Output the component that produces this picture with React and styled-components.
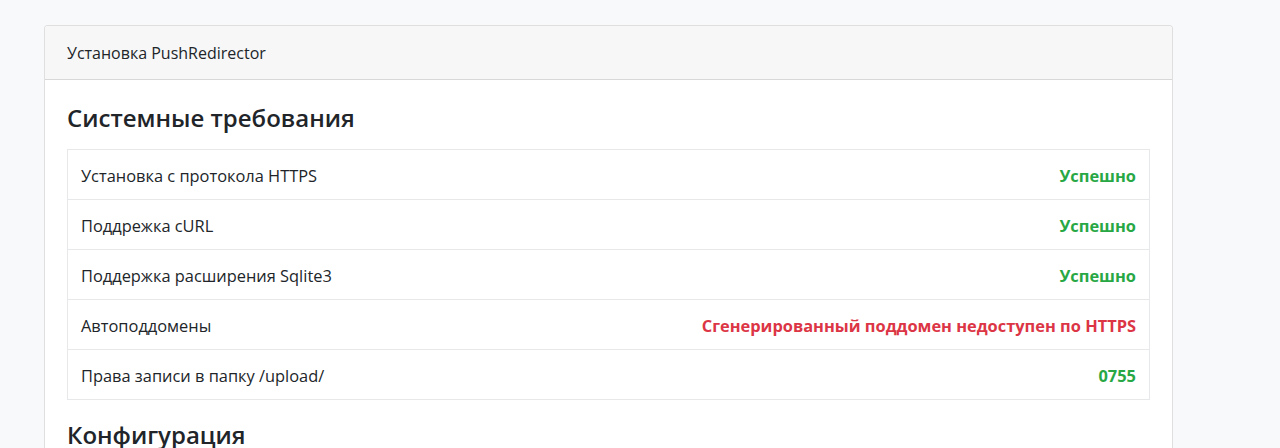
import React from "react";
import styled, { createGlobalStyle } from "styled-components";

const Global = createGlobalStyle`
  html, body { margin: 0; padding: 0; }
  body {
    background: #f8f9fa;
    font-family: "Open Sans", "Noto Sans", "Liberation Sans", sans-serif;
    color: #212529;
    font-size: 16px;
  }
`;

const Page = styled.div`
  padding: 25px 0 0 44px;
`;

const Card = styled.section`
  width: 1129px;
  box-sizing: border-box;
  background: #fff;
  border: 1px solid rgba(0, 0, 0, 0.125);
  border-radius: 4px;
  overflow: hidden;
`;

const CardHeader = styled.header`
  background: #f7f7f7;
  border-bottom: 1px solid rgba(0, 0, 0, 0.125);
  padding: 15px 22px 14px;
  line-height: 24px;
  font-size: 16px;
`;

const CardBody = styled.div`
  padding: 22px 22px 22px;
`;

const Heading = styled.h3`
  margin: 0 0 16px;
  font-size: 24px;
  line-height: 31px;
  font-weight: 600;
`;

const Table = styled.table`
  width: 100%;
  border-collapse: collapse;
  margin-bottom: 19px;
  background: #fff;
`;

const Cell = styled.td`
  border: 1px solid #e6e8ea;
  border-left: ${(p) => (p.$right ? "none" : "1px solid #e6e8ea")};
  border-right: ${(p) => (p.$right ? "1px solid #e6e8ea" : "none")};
  padding: 13px 13px 11px 13px;
  line-height: 25px;
  font-size: 16.4px;
  text-align: ${(p) => (p.$right ? "right" : "left")};
  font-weight: ${(p) => (p.$right ? 700 : 400)};
  color: ${(p) =>
    p.$status === "ok" ? "#28a745" : p.$status === "fail" ? "#dc3545" : "#212529"};
`;

const rows = [
  ["Установка с протокола HTTPS", "Успешно", "ok"],
  ["Поддрежка cURL", "Успешно", "ok"],
  ["Поддержка расширения Sqlite3", "Успешно", "ok"],
  ["Автоподдомены", "Сгенерированный поддомен недоступен по HTTPS", "fail"],
  ["Права записи в папку /upload/", "0755", "ok"],
];

export default function App() {
  return (
    <>
      <Global />
      <Page>
        <Card>
          <CardHeader>Установка PushRedirector</CardHeader>
          <CardBody>
            <Heading>Системные требования</Heading>
            <Table>
              <tbody>
                {rows.map(([name, value, status]) => (
                  <tr key={name}>
                    <Cell>{name}</Cell>
                    <Cell $right $status={status}>
                      {value}
                    </Cell>
                  </tr>
                ))}
              </tbody>
            </Table>
            <Heading>Конфигурация</Heading>
          </CardBody>
        </Card>
      </Page>
    </>
  );
}
